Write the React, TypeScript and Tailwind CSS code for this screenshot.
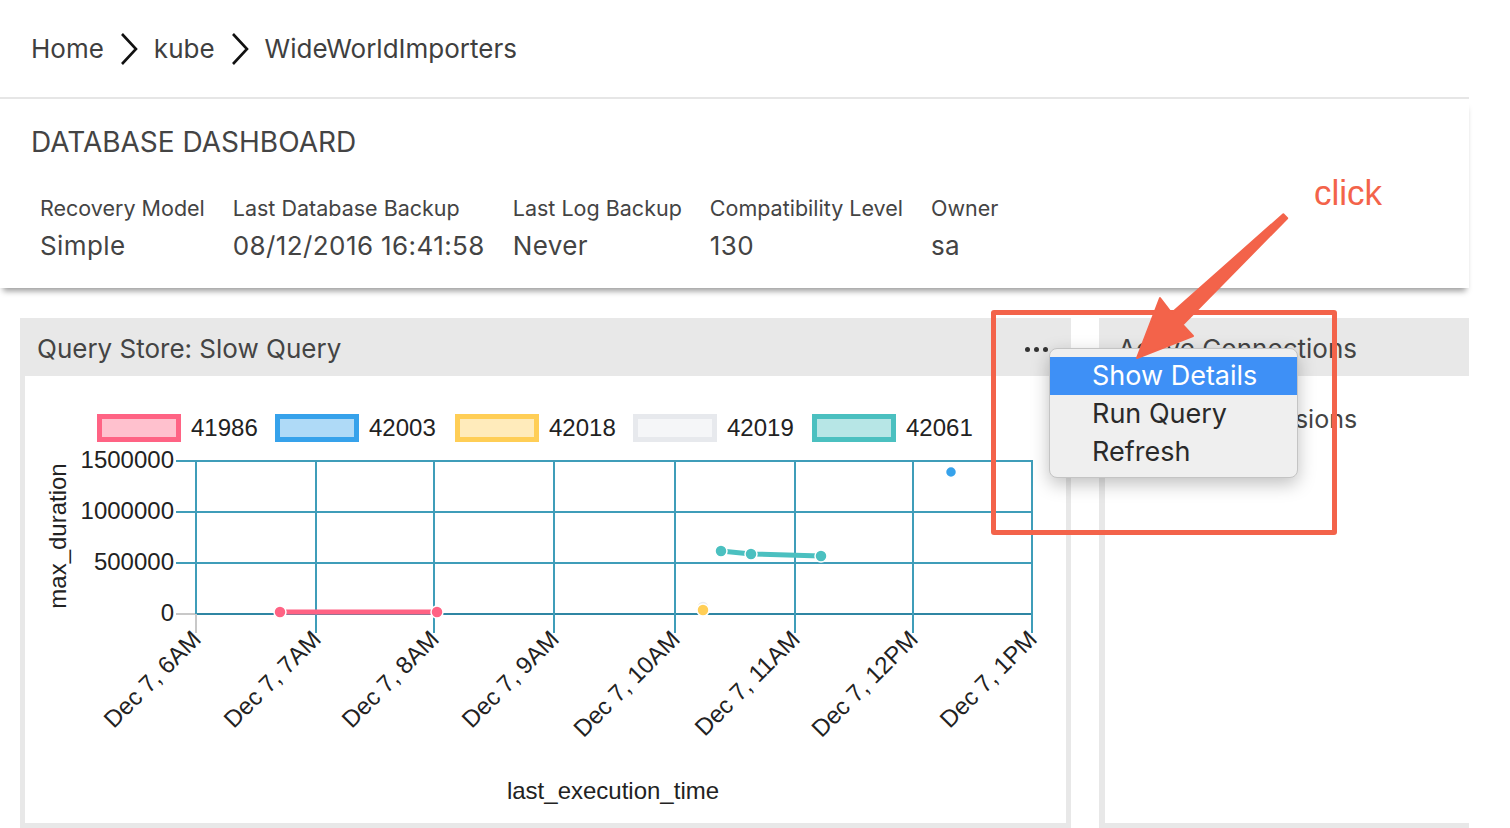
import React from "react";

const UI = { fontFamily: "Inter, 'Noto Sans', sans-serif" };
const CH = "'Liberation Sans', Arial, sans-serif";

function Chevron() {
  return (
    <svg width="20" height="34" viewBox="0 0 20 34" className="mx-[15px]">
      <polyline points="3,2 17,17 3,32" fill="none" stroke="#111" strokeWidth="2.6" />
    </svg>
  );
}

function Prop({ label, value }: { label: string; value: string }) {
  return (
    <div className="flex flex-col">
      <div className="text-[21.5px] leading-[24px] text-[#444]">{label}</div>
      <div className="mt-[11px] text-[26px] leading-[30px] text-[#444] tracking-[0.4px]">{value}</div>
    </div>
  );
}

const xs = [196, 316, 434, 554, 675, 795, 913, 1032];
const ys = [461, 512, 563, 614];
const yLabels = ["1500000", "1000000", "500000", "0"];
const xLabels = [
  "Dec 7, 6AM",
  "Dec 7, 7AM",
  "Dec 7, 8AM",
  "Dec 7, 9AM",
  "Dec 7, 10AM",
  "Dec 7, 11AM",
  "Dec 7, 12PM",
  "Dec 7, 1PM",
];
const legend = [
  { label: "41986", stroke: "#ff6384", fill: "#ffc1ce", x: 97 },
  { label: "42003", stroke: "#36a2eb", fill: "#afdaf7", x: 275 },
  { label: "42018", stroke: "#ffce56", fill: "#ffebbb", x: 455 },
  { label: "42019", stroke: "#e7e9ed", fill: "#f5f6f8", x: 633 },
  { label: "42061", stroke: "#4bc0c0", fill: "#b7e6e6", x: 812 },
];

function Chart() {
  const grid = "#3f9db9";
  return (
    <svg width="1041" height="447" viewBox="25 376 1041 447" style={{ fontFamily: CH }}>
      {legend.map((l) => (
        <g key={l.label}>
          <rect x={l.x + 2.5} y={416.5} width={79} height={23} fill={l.fill} stroke={l.stroke} strokeWidth={5} />
          <text x={l.x + 94} y={430} fontSize={24} fill="#222" dominantBaseline="middle">
            {l.label}
          </text>
        </g>
      ))}
      {ys.map((y, i) => (
        <line
          key={y}
          x1={i === 3 ? 196 : 176}
          x2={1032}
          y1={y}
          y2={y}
          stroke={i === 3 ? "#2f86a3" : grid}
          strokeWidth={2}
        />
      ))}
      <line x1={176} x2={196} y1={614} y2={614} stroke="#c8c8c8" strokeWidth={2} />
      {xs.map((x, i) => (
        <line key={x} x1={x} x2={x} y1={460} y2={i === 0 ? 614 : 633} stroke={grid} strokeWidth={2} />
      ))}
      <line x1={196} x2={196} y1={614} y2={633} stroke="#c8c8c8" strokeWidth={2} />
      {ys.map((y, i) => (
        <text key={y} x={174} y={y + 1} fontSize={24} fill="#222" textAnchor="end" dominantBaseline="middle">
          {yLabels[i]}
        </text>
      ))}
      <text
        x={60}
        y={536}
        fontSize={24}
        fill="#222"
        textAnchor="middle"
        dominantBaseline="middle"
        transform="rotate(-90 60 536)"
      >
        max_duration
      </text>
      {xs.map((x, i) => (
        <text
          key={x}
          x={x + 2}
          y={636}
          fontSize={24}
          fill="#222"
          textAnchor="end"
          dominantBaseline="middle"
          transform={`rotate(-45 ${x + 2} 636)`}
        >
          {xLabels[i]}
        </text>
      ))}
      <text x={613} y={793} fontSize={24} fill="#222" textAnchor="middle" dominantBaseline="middle">
        last_execution_time
      </text>
      <line x1={280} y1={612} x2={437} y2={612} stroke="#ff6384" strokeWidth={5} />
      <circle cx={280} cy={612} r={6} fill="#ff6384" stroke="#fff" strokeWidth={1.5} />
      <circle cx={437} cy={612} r={6} fill="#ff6384" stroke="#fff" strokeWidth={1.5} />
      <polyline points="721,551 751,554 821,556" fill="none" stroke="#4bc0c0" strokeWidth={5} />
      <circle cx={721} cy={551} r={6} fill="#4bc0c0" stroke="#fff" strokeWidth={1.5} />
      <circle cx={751} cy={554} r={6} fill="#4bc0c0" stroke="#fff" strokeWidth={1.5} />
      <circle cx={821} cy={556} r={6} fill="#4bc0c0" stroke="#fff" strokeWidth={1.5} />
      <circle cx={703} cy={607} r={6} fill="#e7e9ed" stroke="#fff" strokeWidth={1.5} />
      <circle cx={703} cy={610} r={6} fill="#ffce56" stroke="#fff" strokeWidth={1.5} />
      <circle cx={951} cy={472} r={5.5} fill="#36a2eb" stroke="#fff" strokeWidth={1.5} />
    </svg>
  );
}

export default function App() {
  return (
    <div className="relative w-[1510px] h-[828px] overflow-hidden bg-white text-[#444]" style={UI}>
      <div className="w-[1469px]">
        <div className="h-[97px] flex items-center pl-[31px] text-[26px] text-[#3f3f3f] border-b-2 border-[#e6e6e6] box-content">
          <span>Home</span>
          <Chevron />
          <span>kube</span>
          <Chevron />
          <span>WideWorldImporters</span>
        </div>
        <div className="relative z-10 bg-white pt-[27px] pb-[27px] shadow-[0_6px_6px_-3px_rgba(0,0,0,0.4)]">
          <div className="pl-[31px] text-[28px] leading-[32px] text-[#444]">DATABASE DASHBOARD</div>
          <div className="mt-[38px] pl-[40px] flex gap-[28px]">
            <Prop label="Recovery Model" value="Simple" />
            <Prop label="Last Database Backup" value="08/12/2016 16:41:58" />
            <Prop label="Last Log Backup" value="Never" />
            <Prop label="Compatibility Level" value="130" />
            <Prop label="Owner" value="sa" />
          </div>
        </div>
        <div className="mt-[30px] pl-[20px] flex gap-[28px] h-[510px]">
          <div className="w-[1051px] bg-[#e8e8e8] flex flex-col">
            <div className="h-[58px] flex items-center justify-between pl-[17px] pr-[23px] pt-[2px]">
              <span className="text-[26px] text-[#444]">Query Store: Slow Query</span>
              <div className="flex gap-[4px] items-center pt-[2px]">
                <span className="w-[5px] h-[5px] rounded-full bg-[#333]" />
                <span className="w-[5px] h-[5px] rounded-full bg-[#333]" />
                <span className="w-[5px] h-[5px] rounded-full bg-[#333]" />
              </div>
            </div>
            <div className="flex-1 mx-[5px] mb-[5px] bg-white overflow-hidden">
              <Chart />
            </div>
          </div>
          <div className="flex-1 bg-[#e8e8e8] flex flex-col">
            <div className="h-[58px] flex items-center pl-[19px] pt-[2px]">
              <span className="text-[26px] text-[#444] whitespace-nowrap">Active Connections</span>
            </div>
            <div className="flex-1 ml-[6px] mb-[5px] bg-white pl-[13px] pt-[27px]">
              <span className="text-[25px] leading-[32px] text-[#444] whitespace-nowrap">Number of Sessions</span>
            </div>
          </div>
        </div>
      </div>

      <div className="absolute left-[1049px] top-[348px] w-[249px] h-[130px] py-[8px] rounded-[8px] bg-[#efefef] border border-[#c4c4c4] shadow-[0_6px_18px_rgba(0,0,0,0.25)] z-20">
        <div className="h-[38px] bg-[#3e90f6] text-white text-[27px] leading-[38px] pl-[42px]">Show Details</div>
        <div className="h-[38px] text-[#2a2a2a] text-[27px] leading-[38px] pl-[42px]">Run Query</div>
        <div className="h-[38px] text-[#2a2a2a] text-[27px] leading-[38px] pl-[42px]">Refresh</div>
      </div>

      <div className="absolute left-[991px] top-[310px] w-[346px] h-[225px] border-[5px] border-[#f3634a] rounded-[3px] z-30" />
      <div
        className="absolute left-[1314px] top-[172px] text-[35px] leading-[42px] text-[#f3634a] z-30"
        style={{ fontFamily: CH }}
      >
        click
      </div>
      <svg
        className="absolute left-[1120px] top-[200px] z-40"
        width="180"
        height="170"
        viewBox="1120 200 180 170"
      >
        <polygon
          points="1283.3,214.2 1171.5,313.2 1160,298 1137,358 1193,336 1182.5,324.8 1287.2,218.2"
          fill="#f3634a"
          stroke="#f3634a"
          strokeWidth={2}
          strokeLinejoin="round"
        />
      </svg>
    </div>
  );
}
